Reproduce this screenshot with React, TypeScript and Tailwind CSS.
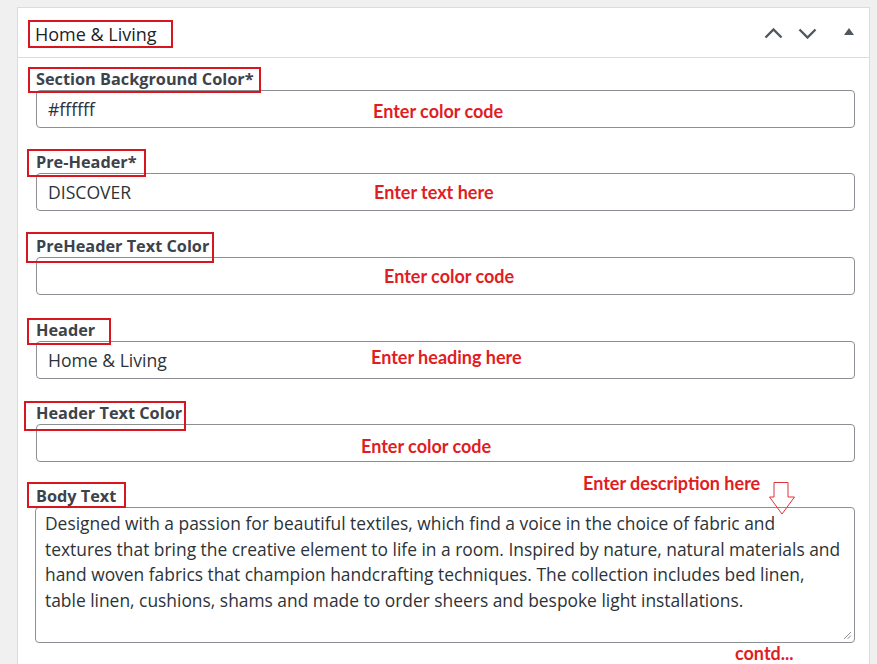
import React from 'react'

type Row = {
  label: string
  value?: string
  note: string
  box: string
  noteCls: string
  gap: string
}

const ROWS: Row[] = [
  {
    label: 'Section Background Color*',
    value: '#ffffff',
    note: 'Enter color code',
    box: 'left-[-8px] top-[0px] w-[233px] h-[26px]',
    noteCls: 'left-[336px] top-[9px]',
    gap: 'mb-[22px]',
  },
  {
    label: 'Pre-Header*',
    value: 'DISCOVER',
    note: 'Enter text here',
    box: 'left-[-9px] top-[-1px] w-[119px] h-[28px]',
    noteCls: 'left-[337px] top-[7px]',
    gap: 'mb-[23px]',
  },
  {
    label: 'PreHeader Text Color',
    note: 'Enter color code',
    box: 'left-[-10px] top-[-2px] w-[188px] h-[31px]',
    noteCls: 'left-[347px] top-[7px]',
    gap: 'mb-[23px]',
  },
  {
    label: 'Header',
    value: 'Home & Living',
    note: 'Enter heading here',
    box: 'left-[-9px] top-[0px] w-[84px] h-[27px]',
    noteCls: 'left-[334px] top-[4px]',
    gap: 'mb-[22px]',
  },
  {
    label: 'Header Text Color',
    note: 'Enter color code',
    box: 'left-[-12px] top-[0px] w-[162px] h-[30px]',
    noteCls: 'left-[324px] top-[10px]',
    gap: 'mb-[22px]',
  },
]

const BODY =
  'Designed with a passion for beautiful textiles, which find a voice in the choice of fabric and\ntextures that bring the creative element to life in a room. Inspired by nature, natural materials and\nhand woven fabrics that champion handcrafting techniques. The collection includes bed linen,\ntable linen, cushions, shams and made to order sheers and bespoke light installations.'

const ui = "font-['Open_Sans','Noto_Sans',sans-serif]"
const note = "font-['Lato',sans-serif] font-bold text-[18px] leading-[22px] text-[#e11d24] whitespace-nowrap"

function Label({ text, box }: { text: string; box: string }) {
  return (
    <div className="relative h-[23px]">
      <span className={`absolute ${box} border-2 border-[#d8161f] z-10 pointer-events-none`} />
      <span className="text-[16.3px] leading-[23px] font-bold text-[#3c434a] whitespace-nowrap">{text}</span>
    </div>
  )
}

export default function App() {
  return (
    <div className={`min-h-screen bg-[#f0f0f1] pl-[17px] pr-[7px] pt-[7px] ${ui}`}>
      <div className="bg-white border border-[#dcdcde] min-h-[680px]">
        {/* Header */}
        <div className="flex items-center h-[50px] border-b border-[#dcdcde] pl-[17px] pr-[15px]">
          <div className="relative h-[24px] mt-[2px]">
            <span className="absolute left-[-7px] top-[-2px] w-[145px] h-[28px] border-2 border-[#d8161f]" />
            <span className="block text-[18px] leading-[24px] text-[#1d2327]">Home &amp; Living</span>
          </div>
          <div className="ml-auto flex items-center text-[#50575e] mt-[1px]">
            <svg width="19" height="11" viewBox="0 0 19 11" className="mr-[15px] -ml-[2px]">
              <path d="M1.5 9.5 L9.5 1.5 L17.5 9.5" fill="none" stroke="currentColor" strokeWidth="2.4" />
            </svg>
            <svg width="19" height="11" viewBox="0 0 19 11" className="mr-[27px]">
              <path d="M1.5 1.5 L9.5 9.5 L17.5 1.5" fill="none" stroke="currentColor" strokeWidth="2.4" />
            </svg>
            <svg width="10" height="7" viewBox="0 0 10 7" className="mt-[-3px]">
              <path d="M0 7 L5 0 L10 7 Z" fill="currentColor" />
            </svg>
          </div>
        </div>

        {/* Fields */}
        <div className="pl-[18px] pr-[14px] pt-[9px]">
          {ROWS.map((r) => (
            <div key={r.label} className={r.gap}>
              <Label text={r.label} box={r.box} />
              <div className="relative h-[38px] border border-[#8c8f94] rounded-[4px] flex items-center px-[11px]">
                <span className="text-[17.6px] text-[#2c3338]">{r.value}</span>
                <span className={`absolute ${r.noteCls} ${note}`}>{r.note}</span>
              </div>
            </div>
          ))}

          <div>
            <Label text="Body Text" box="left-[-9px] top-[-2px] w-[99px] h-[26px]" />
            <div className="relative h-[136px] border border-[#8c8f94] rounded-[4px] px-[9px] pt-[3px] -ml-px">
              <div className="text-[17.4px] leading-[25.5px] text-[#2c3338] whitespace-pre">{BODY}</div>
              <span className={`absolute left-[547px] top-[-36px] ${note}`}>Enter description here</span>
              <svg width="27" height="34" viewBox="0 0 27 34" className="absolute left-[733px] top-[-26px]">
                <path d="M5 0.5 H19 V15 H25.5 L13 32 L0.5 15 H5 Z" fill="none" stroke="#e0333a" strokeWidth="1" />
              </svg>
              <svg width="9" height="9" viewBox="0 0 9 9" className="absolute right-[2px] bottom-[2px]">
                <path d="M8 1 L1 8 M8 4.5 L4.5 8" stroke="#8c8f94" strokeWidth="1" />
              </svg>
              <span className={`absolute left-[699px] top-[134px] ${note}`}>contd...</span>
            </div>
          </div>
        </div>
      </div>
    </div>
  )
}
